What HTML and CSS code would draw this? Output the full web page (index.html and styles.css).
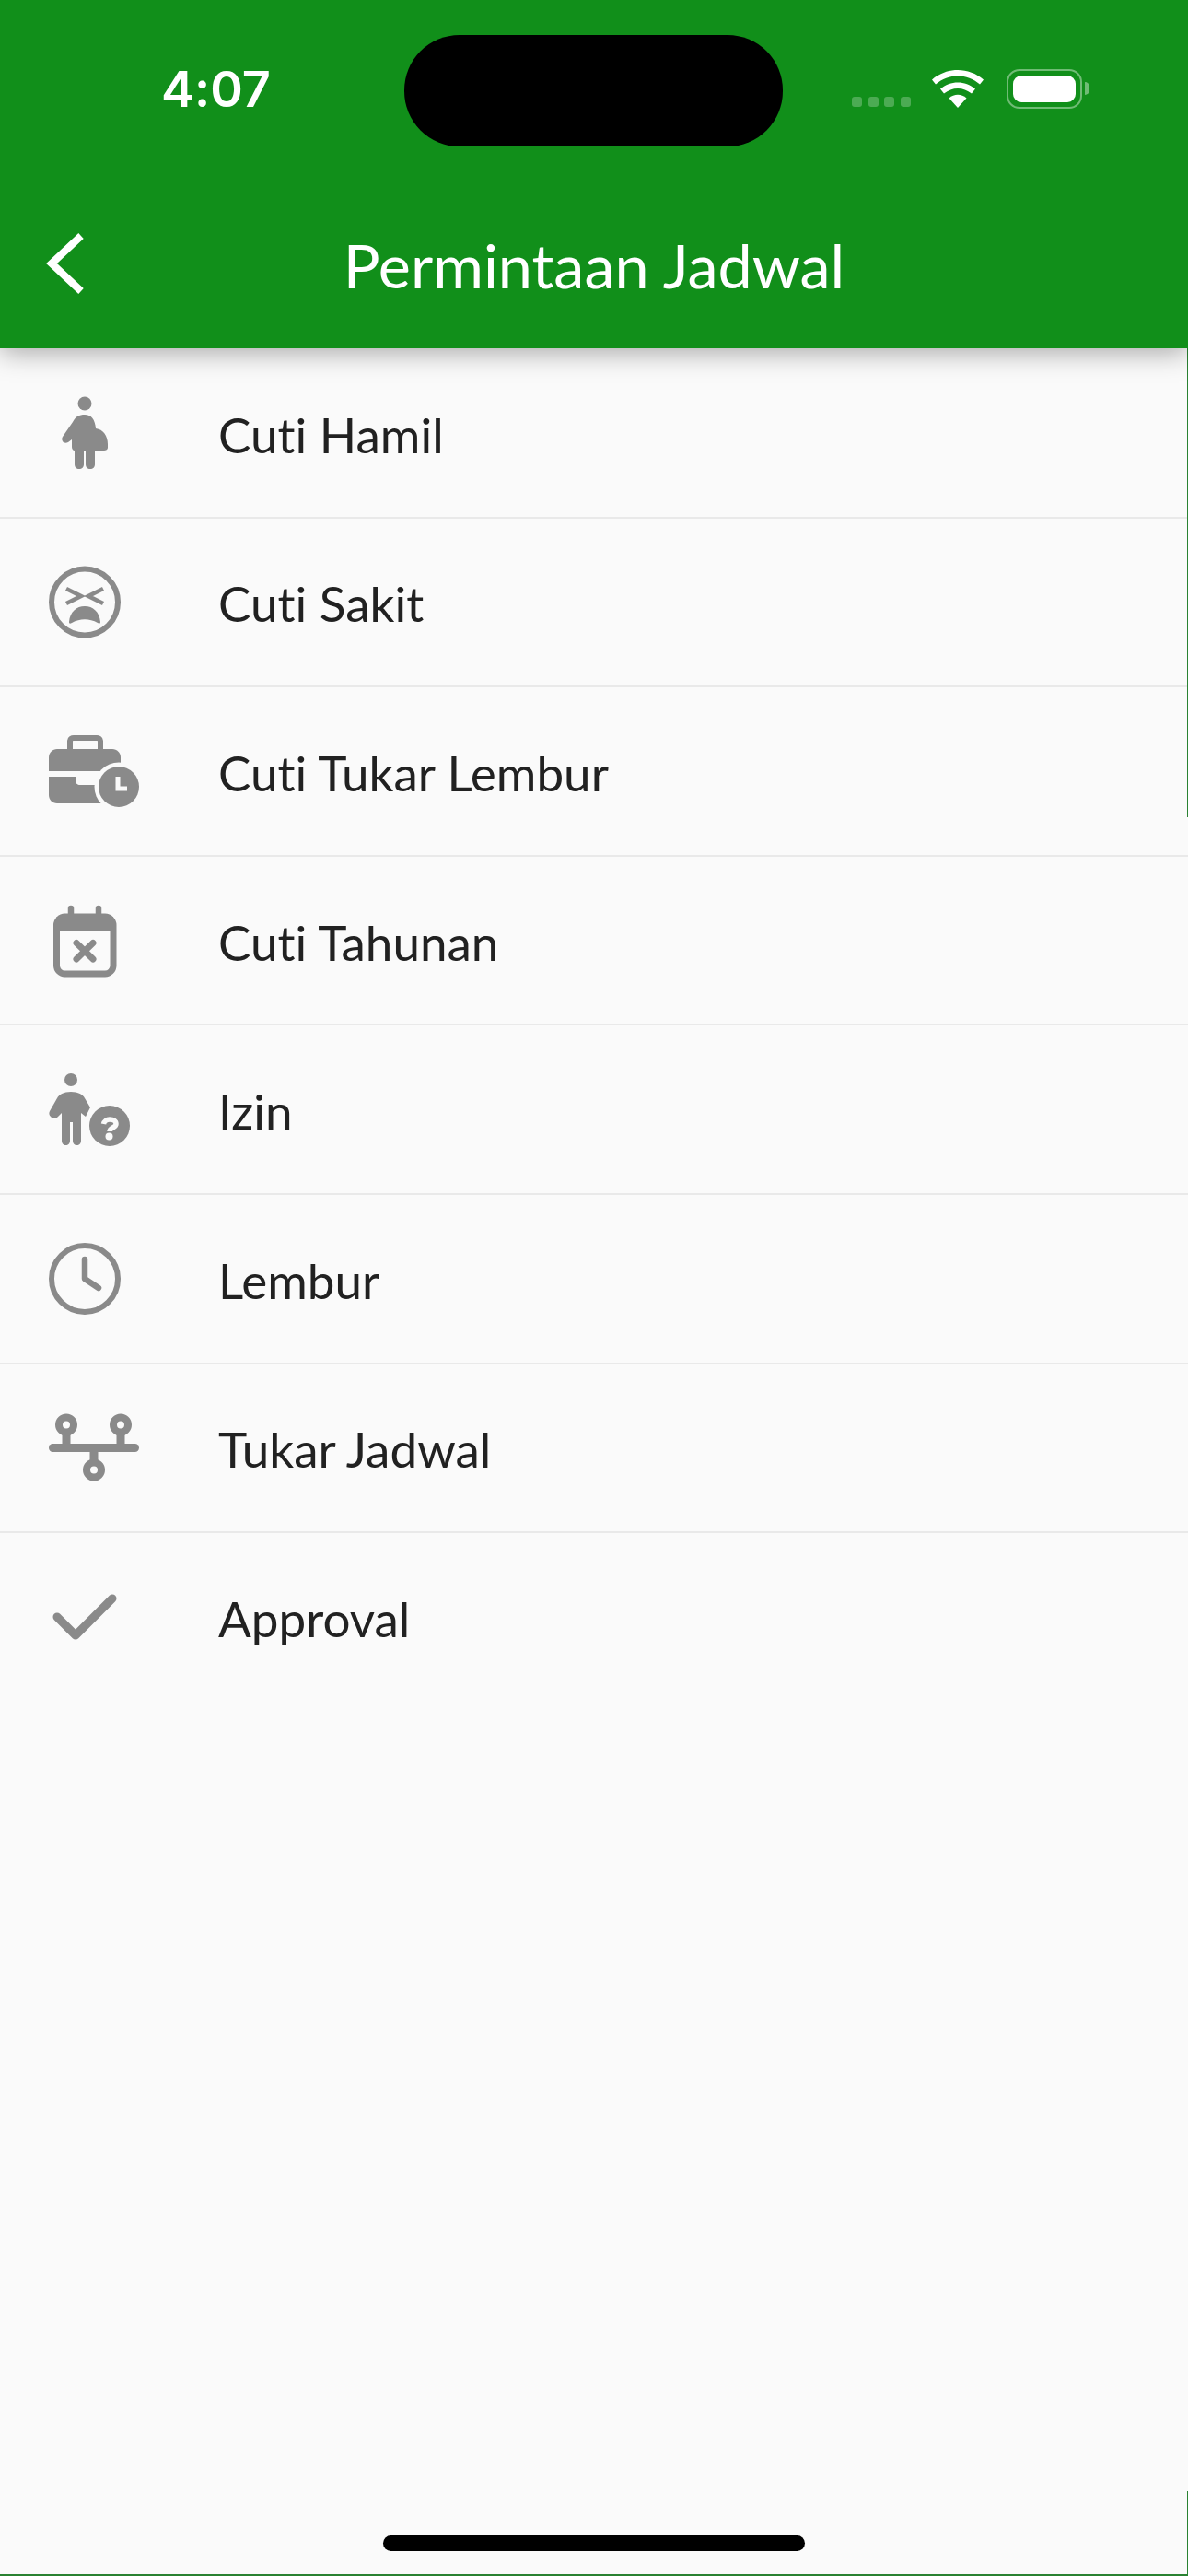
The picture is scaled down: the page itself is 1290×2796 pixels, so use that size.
FILE: index.html
```html
<!DOCTYPE html>
<html lang="en">
<head>
  <meta charset="UTF-8" />
  <meta name="viewport" content="width=device-width, initial-scale=1.0"/>
  <title>Permintaan Jadwal</title>
  <link rel="stylesheet" href="styles.css">
</head>
<body>

  <div class="screen">
    <header class="app-header">
      <div class="status-bar">
        <span class="clock">4:07</span>
        <div class="island"></div>
        <div class="status-icons">
          <div class="signal"><i></i><i></i><i></i><i></i></div>
          <svg class="wifi" width="56" height="42" viewBox="0 0 56 42">
            <path fill="#fff" d="M28 42 L18.500 31.500 C24 26.500 32 26.500 37.500 31.500 Z"/>
            <path fill="#fff" d="M13 26.500 L9 21.500 C20 12 36 12 47 21.500 L43 26.500 C34 19 22 19 13 26.500 Z"/>
            <path fill="#fff" d="M4 16.500 L0 11.500 C16 -2.500 40 -2.500 56 11.500 L52 16.500 C38 4.500 18 4.500 4 16.500 Z"/>
          </svg>
          <div class="battery"><div class="battery-fill"></div></div>
          <div class="battery-cap"></div>
        </div>
      </div>
      <div class="title-bar">
        <svg class="back" width="42" height="66" viewBox="0 0 42 66">
          <path d="M38 3 L6 33 L38 63" fill="none" stroke="#fff" stroke-width="8"/>
        </svg>
        <h1>Permintaan Jadwal</h1>
      </div>
    </header>

    <ul class="menu">
      <li class="menu-item">
        <span class="menu-icon">
          <svg width="100" height="84" viewBox="0 0 100 84">
            <circle cx="39" cy="10" r="7.500" fill="#8a8a8a"/>
            <path fill="#8a8a8a" d="M39 22 C46 22 50 27 51 37 C59 38 64 45 64 54 V58 C64 60 62 61 60 61 H50 V76 C50 79 48 81 45 81 C42 81 40 79 40 76 V61 H38 V76 C38 79 36 81 33 81 C30 81 28 79 28 76 V61 C26 61 25 59 25 57 V49 L21 52 C19 53 16 53 15 51 C14 49 14 48 15 46 L26 30 C29 24 33 22 39 22 Z"/>
          </svg>
        </span>
        <span class="menu-label">Cuti Hamil</span>
      </li>
      <li class="menu-item">
        <span class="menu-icon">
          <svg width="100" height="84" viewBox="0 0 100 84">
            <circle cx="39" cy="42.500" r="36" fill="none" stroke="#8a8a8a" stroke-width="6"/>
            <path d="M19 28 L35 36 L19 44 M59 28 L43 36 L59 44" fill="none" stroke="#8a8a8a" stroke-width="4.500"/>
            <path fill="#8a8a8a" d="M22 64 C23 53 30 47 39 47 C48 47 55 53 56 64 C56 66 55 66 53 65 C44 60 34 60 25 65 C23 66 22 66 22 64 Z"/>
          </svg>
        </span>
        <span class="menu-label">Cuti Sakit</span>
      </li>
      <li class="menu-item">
        <span class="menu-icon">
          <svg width="100" height="84" viewBox="0 0 100 84">
            <path fill="none" stroke="#8a8a8a" stroke-width="6" d="M23 18 V9 C23 7 25 6 27 6 H52 C54 6 56 7 56 9 V18"/>
            <path fill="#8a8a8a" d="M0 42 V27 C0 22 4 18 9 18 H69 C74 18 78 22 78 27 V42 Z"/>
            <path fill="#8a8a8a" d="M0 48 H29 V52 C29 55 31 57 34 57 H60 V77 H9 C4 77 0 73 0 68 Z"/>
            <circle cx="76" cy="59" r="26.500" fill="#fafafa"/>
            <circle cx="76" cy="59" r="22" fill="#8a8a8a"/>
            <path d="M75 48 V61 H85" fill="none" stroke="#fafafa" stroke-width="5"/>
          </svg>
        </span>
        <span class="menu-label">Cuti Tukar Lembur</span>
      </li>
      <li class="menu-item">
        <span class="menu-icon">
          <svg width="100" height="84" viewBox="0 0 100 84">
            <path d="M24 20 V7 M54 20 V7" fill="none" stroke="#8a8a8a" stroke-width="6.500" stroke-linecap="round"/>
            <rect x="8.500" y="16" width="61.500" height="62" rx="9" fill="none" stroke="#8a8a8a" stroke-width="7"/>
            <rect x="8.500" y="16" width="61.500" height="16" fill="#8a8a8a"/>
            <path d="M30 44.500 L48 62 M48 44.500 L30 62" fill="none" stroke="#8a8a8a" stroke-width="7" stroke-linecap="round"/>
          </svg>
        </span>
        <span class="menu-label">Cuti Tahunan</span>
      </li>
      <li class="menu-item">
        <span class="menu-icon">
          <svg width="100" height="84" viewBox="0 0 100 84">
            <circle cx="24" cy="10" r="7" fill="#8a8a8a"/>
            <path fill="#8a8a8a" d="M24 23 C32 23 37 26 39 30 L45 40 L40 50 L35 46 V76 C35 79 33 81 30.500 81 C28 81 26 79 26 76 V56 H23 V76 C23 79 21 81 18.500 81 C16 81 14 79 14 76 V46 L10 50 C8 52 4 52 2 50 C0 48 0 46 1 44 L9 30 C11 26 16 23 24 23 Z"/>
            <circle cx="66" cy="60" r="22" fill="#8a8a8a"/>
            <path d="M59.500 58 C60 55 63 53 66 53 C70 53 73 55 73 58 C73 62 66 62 66 66" fill="none" stroke="#fafafa" stroke-width="5.500"/>
            <circle cx="65.500" cy="71.500" r="4" fill="#fafafa"/>
          </svg>
        </span>
        <span class="menu-label">Izin</span>
      </li>
      <li class="menu-item">
        <span class="menu-icon">
          <svg width="100" height="84" viewBox="0 0 100 84">
            <circle cx="39" cy="42" r="36" fill="none" stroke="#8a8a8a" stroke-width="6"/>
            <path d="M39 21 V42 L54 52" fill="none" stroke="#8a8a8a" stroke-width="6.500" stroke-linecap="round" stroke-linejoin="round"/>
          </svg>
        </span>
        <span class="menu-label">Lembur</span>
      </li>
      <li class="menu-item">
        <span class="menu-icon">
          <svg width="100" height="84" viewBox="0 0 100 84">
            <path d="M4.500 42.500 H93.500" fill="none" stroke="#8a8a8a" stroke-width="9" stroke-linecap="round"/>
            <path d="M19 24 V42 M78 24 V42 M49 42 V60" fill="none" stroke="#8a8a8a" stroke-width="9"/>
            <circle cx="19" cy="17.500" r="8" fill="none" stroke="#8a8a8a" stroke-width="8"/>
            <circle cx="78" cy="17.500" r="8" fill="none" stroke="#8a8a8a" stroke-width="8"/>
            <circle cx="49" cy="66.500" r="8" fill="none" stroke="#8a8a8a" stroke-width="8"/>
          </svg>
        </span>
        <span class="menu-label">Tukar Jadwal</span>
      </li>
      <li class="menu-item">
        <span class="menu-icon">
          <svg width="100" height="84" viewBox="0 0 100 84">
            <path d="M9 42 L29 62 L69 22" fill="none" stroke="#8a8a8a" stroke-width="9" stroke-linecap="round" stroke-linejoin="round"/>
          </svg>
        </span>
        <span class="menu-label">Approval</span>
      </li>
    </ul>

    <div class="home-indicator"></div>
    <div class="edge-line edge-top"></div>
    <div class="edge-line edge-bottom"></div>
  </div>

</body>
</html>
```

FILE: styles.css
```css
* {
  box-sizing: border-box;
}

body {
  margin: 0;
  font-family: Lato, "Open Sans", sans-serif;
  font-variant-ligatures: none;
  background-color: #fafafa;
}

.screen {
  width: 1290px;
  height: 2796px;
  display: flex;
  flex-direction: column;
  background-color: #fafafa;
  border-bottom: 2px solid #2a8232;
  overflow: hidden;
  position: relative;
}

.app-header {
  height: 378px;
  padding-top: 38px;
  background-color: #118f1a;
  box-shadow: 0 4px 28px rgba(0, 0, 0, 0.35);
  position: relative;
  z-index: 1;
}

.status-bar {
  height: 122px;
  display: flex;
  align-items: flex-start;
}

.clock {
  width: 439px;
  padding-left: 175px;
  padding-top: 26px;
  font-family: Inter, sans-serif;
  font-size: 54px;
  font-weight: 600;
  color: white;
}

.island {
  width: 411px;
  height: 121px;
  background-color: black;
  border-radius: 60px;
}

.status-icons {
  flex: 1;
  padding-left: 75px;
  display: flex;
  align-items: flex-start;
  padding-top: 37px;
}

.signal {
  display: flex;
  gap: 6.500px;
  margin-top: 30px;
  margin-right: 23px;
}

.signal i {
  width: 11px;
  height: 11px;
  border-radius: 3px;
  background-color: rgba(255, 255, 255, 0.25);
}

.wifi {
  margin-right: 25px;
}

.battery {
  width: 82px;
  height: 43px;
  padding: 5px;
  border: 2px solid rgba(255, 255, 255, 0.4);
  border-radius: 14px;
}

.battery-fill {
  width: 100%;
  height: 100%;
  background-color: white;
  border-radius: 9px;
}

.battery-cap {
  width: 5px;
  height: 14px;
  margin: 14px 0 0 3px;
  background-color: rgba(255, 255, 255, 0.4);
  border-radius: 0 6px 6px 0;
}

.title-bar {
  height: 218px;
  padding-top: 36px;
  display: flex;
  align-items: center;
  justify-content: center;
  position: relative;
}

.back {
  position: absolute;
  left: 50px;
  top: 93px;
}

h1 {
  margin: 0;
  font-size: 66.500px;
  font-weight: 400;
  color: white;
}

.menu {
  list-style: none;
  margin: 0;
  padding: 1px 0 0;
}

.menu-item {
  height: 183.600px;
  padding-left: 53px;
  display: flex;
  align-items: center;
  border-bottom: 2px solid #e9e9e9;
}

.menu-item:last-child {
  border-bottom-color: transparent;
}

.menu-icon {
  width: 184px;
  height: 84px;
  flex-shrink: 0;
}

.menu-icon svg {
  display: block;
}

.menu-label {
  padding-top: 3px;
  font-size: 53px;
  color: #212121;
}

.home-indicator {
  width: 458px;
  height: 17px;
  margin: auto auto 25px;
  background-color: black;
  border-radius: 9px;
}

/* thin green line left on the right edge of the capture */
.edge-line {
  position: absolute;
  right: 0;
  width: 1px;
  background-color: #2a8232;
}

.edge-top {
  top: 378px;
  height: 509px;
}

.edge-bottom {
  bottom: 0;
  height: 90px;
}
```
